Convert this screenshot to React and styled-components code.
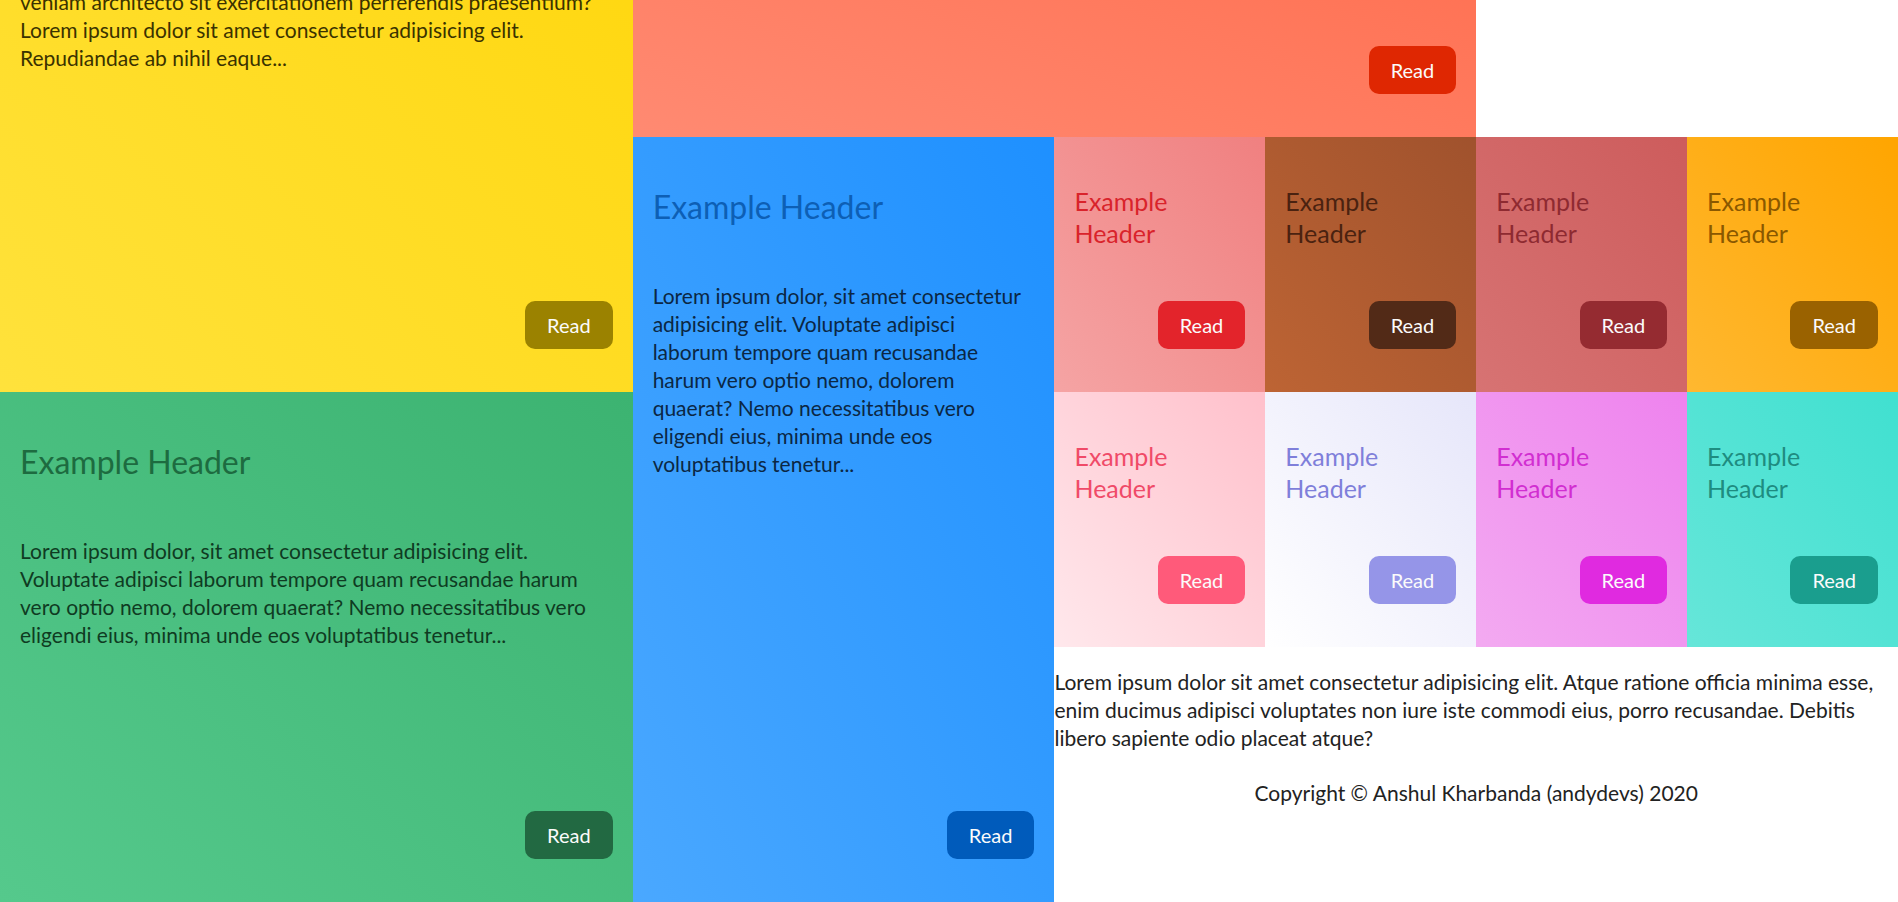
import React, { useLayoutEffect } from 'react';
import styled, { createGlobalStyle } from 'styled-components';

const GlobalStyle = createGlobalStyle`
  html {
    overflow: hidden;
  }
  body {
    margin: 0;
    font-family: 'Lato', 'Open Sans', sans-serif;
    color: #1f1f1f;
    background: #fff;
  }
`;

const Grid = styled.main`
  display: grid;
  grid-template-columns: repeat(9, 1fr);
  grid-template-rows: 322px repeat(3, 255px);
`;

const Card = styled.article`
  grid-column: ${props => props.$col};
  grid-row: ${props => props.$row};
  display: flex;
  flex-direction: column;
  min-width: 0;
  padding: 20px;
  background: linear-gradient(to top right, ${props => props.$light}, ${props => props.$base});
  color: ${props => props.$text};
`;

const Title = styled.h2`
  margin: 28px 0 0;
  font-size: ${props => (props.$small ? '25px' : '32px')};
  line-height: ${props => (props.$small ? '32px' : '44px')};
  font-weight: 400;
  max-width: ${props => (props.$small ? '150px' : 'none')};
  color: ${props => props.$color};
`;

const Text = styled.p`
  margin: 53px 0 0;
  font-size: 21px;
  line-height: 28px;
`;

const ReadButton = styled.button`
  margin: auto 0 23px auto;
  padding: 10px 22px;
  border: none;
  border-radius: 10px;
  font-family: inherit;
  font-size: 20px;
  line-height: 28px;
  color: #fbfbfb;
  background: ${props => props.$color};
  cursor: pointer;
`;

const About = styled.section`
  grid-column: 6 / 10;
  grid-row: 4;
  color: #222;
  p {
    margin: 21px 0 0;
    font-size: 21px;
    line-height: 28px;
  }
`;

const Copyright = styled.p`
  text-align: center;
  && {
    margin-top: 27px;
  }
`;

const SHORT = 'Lorem ipsum dolor sit amet consectetur adipisicing elit.';
const LONG =
  'Lorem ipsum dolor, sit amet consectetur adipisicing elit. Voluptate adipisci laborum tempore quam recusandae harum vero optio nemo, dolorem quaerat? Nemo necessitatibus vero eligendi eius, minima unde eos voluptatibus tenetur...';
const YELLOW =
  'Lorem ipsum dolor sit amet consectetur adipisicing elit. Quidem veniam architecto sit exercitationem perferendis praesentium? Lorem ipsum dolor sit amet consectetur adipisicing elit. Repudiandae ab nihil eaque...';

const cards = [
  { col: '1 / 4', row: '1 / 3', light: '#ffe23c', base: '#ffd60a', head: '#8a7400', text: '#3a3200', btn: '#9b8200', body: YELLOW },
  { col: '4 / 8', row: '1', light: '#ff8a72', base: '#ff6a4a', head: '#c4260a', text: '#4a1408', btn: '#df2702', body: SHORT },
  { col: '4 / 6', row: '2 / 5', light: '#4aa8ff', base: '#1e90ff', head: '#0d5fb5', text: '#0b2744', btn: '#005bbb', body: LONG },
  { col: '6', row: '2', light: '#f5a4a4', base: '#f08080', head: '#d9232b', btn: '#e3242b', small: true },
  { col: '7', row: '2', light: '#bd6434', base: '#a0522d', head: '#4a2210', btn: '#522a17', small: true },
  { col: '8', row: '2', light: '#d77373', base: '#cd5c5c', head: '#8e2a31', btn: '#952b31', small: true },
  { col: '9', row: '2', light: '#ffb830', base: '#ffa500', head: '#8a5800', btn: '#9a6200', small: true },
  { col: '6', row: '3', light: '#ffe8ec', base: '#ffc0cb', head: '#f04a68', btn: '#ff5a7a', small: true },
  { col: '7', row: '3', light: '#ffffff', base: '#e6e6fa', head: '#7f7fda', btn: '#9595e8', small: true },
  { col: '8', row: '3', light: '#f3aaf1', base: '#ee82ee', head: '#d12ed1', btn: '#e02ae0', small: true },
  { col: '9', row: '3', light: '#66e6d9', base: '#40e0d0', head: '#1e8c80', btn: '#1a9e8e', small: true },
  { col: '1 / 4', row: '3 / 5', light: '#55c98c', base: '#3cb371', head: '#1d6b40', text: '#0f3b22', btn: '#226942', body: LONG },
];

export default function App() {
  useLayoutEffect(() => {
    window.scrollTo(0, document.documentElement.scrollHeight);
  }, []);

  return (
    <>
      <GlobalStyle />
      <Grid>
        {cards.map((c, i) => (
          <Card key={i} $col={c.col} $row={c.row} $light={c.light} $base={c.base} $text={c.text}>
            <Title $small={c.small} $color={c.head}>Example Header</Title>
            {c.body && <Text>{c.body}</Text>}
            <ReadButton $color={c.btn}>Read</ReadButton>
          </Card>
        ))}
        <About>
          <p>
            Lorem ipsum dolor sit amet consectetur adipisicing elit. Atque ratione officia minima esse,
            enim ducimus adipisci voluptates non iure iste commodi eius, porro recusandae. Debitis
            libero sapiente odio placeat atque?
          </p>
          <Copyright>Copyright © Anshul Kharbanda (andydevs) 2020</Copyright>
        </About>
      </Grid>
    </>
  );
}
